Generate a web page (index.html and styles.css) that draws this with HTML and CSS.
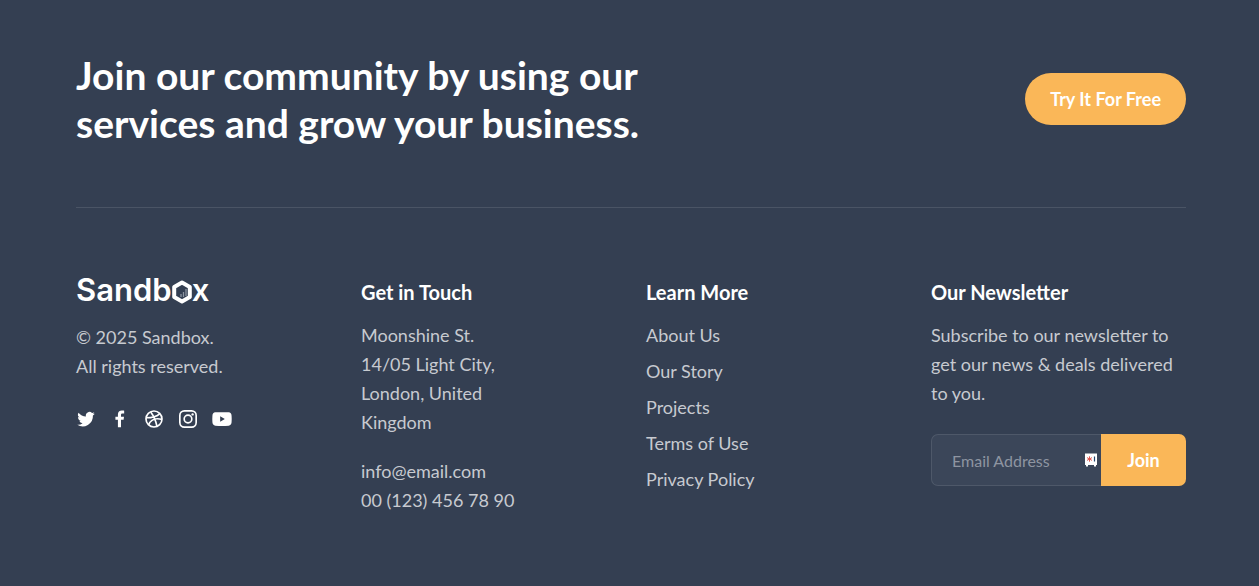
FILE: index.html
```
<!DOCTYPE html>
<html lang="en">
<head>
<meta charset="utf-8">
<meta name="viewport" content="width=device-width, initial-scale=1">
<title>Sandbox</title>
<link rel="stylesheet" href="styles.css">
</head>
<body>
<footer class="footer">
  <div class="cta">
    <h2 class="cta-title">Join our community by using our services and grow your business.</h2>
    <button class="cta-button" type="button">Try It For Free</button>
  </div>
  <div class="columns">
    <div class="column">
      <a class="logo" href="#" aria-label="Sandbox"><span>Sandb</span><svg class="logo-hex" viewBox="0 0 20 24" aria-hidden="true"><path d="M10 2.500 17.800 7v10L10 21.500 2.200 17V7z" fill="none" stroke="#fff" stroke-width="4" stroke-linejoin="round"/><path d="M9 17v-3M11.500 17v-5M14 16V9" stroke="#8d95a1" stroke-width="1.300"/></svg><span>x</span></a>
      <p class="copyright">© 2025 Sandbox.<br>All rights reserved.</p>
      <nav class="social" aria-label="Social">
        <a href="#" aria-label="Twitter"><svg viewBox="0 0 24 24"><path d="M22.500 5.600a8.700 8.700 0 0 1-2.500.7 4.300 4.300 0 0 0 1.900-2.400 8.700 8.700 0 0 1-2.700 1 4.300 4.300 0 0 0-7.300 4A12.200 12.200 0 0 1 3 4.400a4.300 4.300 0 0 0 1.300 5.700 4.300 4.300 0 0 1-1.900-.5 4.300 4.300 0 0 0 3.400 4.300 4.300 4.300 0 0 1-1.900.1 4.300 4.300 0 0 0 4 3A8.600 8.600 0 0 1 1.500 18.800a12.200 12.200 0 0 0 18.800-10.900 8.800 8.800 0 0 0 2.200-2.300z"/></svg></a>
        <a href="#" aria-label="Facebook"><svg viewBox="0 0 24 24"><path d="M9.500 22V13H6.500V9.300h3V6.500c0-3.200 1.900-4.700 4.700-4.700 1.300 0 2.400.1 2.800.2v3.300h-2c-1.500 0-1.800.8-1.800 1.800v2.200h3.600l-.5 3.700h-3.100v9z"/></svg></a>
        <a href="#" aria-label="Dribbble"><svg class="line" viewBox="0 0 24 24"><circle cx="12" cy="12" r="9.600"/><path d="M8 3.500c3.500 4.500 6 9.500 7.500 17M2.500 10.500C9 10.500 15 9.500 19 5.500M5.500 19C8 13 14 10.500 21.500 12.500"/></svg></a>
        <a href="#" aria-label="Instagram"><svg class="line" viewBox="0 0 24 24"><rect x="2.200" y="2.200" width="19.600" height="19.600" rx="5.500"/><circle cx="12" cy="12" r="4.600"/><circle class="dot" cx="17.500" cy="6.500" r="1.400"/></svg></a>
        <a href="#" aria-label="YouTube"><svg viewBox="0 0 24 24"><path fill-rule="evenodd" d="M4 4Q12 3.500 20 4q3.300.3 3.500 4 .3 4 0 8-.2 3.700-3.500 4-8 .5-16 0-3.300-.3-3.500-4-.3-4 0-8Q.7 4.300 4 4zM9.800 8.800v6.400L15.400 12z"/></svg></a>
      </nav>
    </div>
    <div class="column">
      <h3 class="column-title">Get in Touch</h3>
      <address class="address">Moonshine St. 14/05 Light City, London, United Kingdom</address>
      <a href="mailto:info@email.com">info@email.com</a><br>
      <span>00 (123) 456 78 90</span>
    </div>
    <div class="column">
      <h3 class="column-title">Learn More</h3>
      <ul class="links">
        <li><a href="#">About Us</a></li>
        <li><a href="#">Our Story</a></li>
        <li><a href="#">Projects</a></li>
        <li><a href="#">Terms of Use</a></li>
        <li><a href="#">Privacy Policy</a></li>
      </ul>
    </div>
    <div class="column">
      <h3 class="column-title">Our Newsletter</h3>
      <p class="newsletter-text">Subscribe to our newsletter to get our news &amp; deals delivered to you.</p>
      <form class="newsletter">
        <div class="field">
          <input id="email" type="email" placeholder="Email Address" aria-label="Email Address">
          <svg class="field-icon" viewBox="0 0 14 14" aria-hidden="true"><path d="M1 .5h12v11.500h-1v1.500h-2V12H4v1.500H2V12H1z" fill="#fff"/><path d="M5.500 3.300v5.400M3 4.600l5 2.800M8 4.600 3 7.400" stroke="#e0564f" stroke-width="1"/><path d="M10.500 3.500v5" stroke="#22476f" stroke-width="1.200"/></svg>
        </div>
        <button class="join" type="submit">Join</button>
      </form>
    </div>
  </div>
</footer>
</body>
</html>
```
FILE: styles.css
```
* { box-sizing: border-box; }
body {
  margin: 0;
  background: #343f52;
  color: #c7cad0;
  font: 400 18px/29px Lato, sans-serif;
}
a { color: inherit; text-decoration: none; }
h2, h3, p, ul { margin: 0; padding: 0; }
button { border: 0; font: inherit; color: #fff; background: #fab758; font-weight: 700; cursor: pointer; }
.footer { padding: 51px 73px 70px 76px; }
.cta {
  display: flex;
  align-items: center;
  justify-content: space-between;
  padding-bottom: 60px;
  border-bottom: 1px solid #4a5465;
}
.cta-title { max-width: 640px; color: #fff; font-size: 39px; line-height: 48px; font-weight: 700; }
.cta-button { height: 52px; padding: 0 25px; border-radius: 26px; }
.columns { display: grid; grid-template-columns: repeat(4, 1fr); gap: 30px; padding-top: 70px; }
.column-title { margin-bottom: 15px; color: #fff; font-size: 20px; line-height: 28px; font-weight: 700; }
.logo { display: flex; align-items: center; height: 24px; color: #fff; font: 600 31px/24px Inter, sans-serif; }
.logo-hex { width: 20px; height: 24px; margin-top: 4px; }
.copyright { margin-top: 21px; }
.social { display: flex; gap: 14px; margin-top: 28px; }
.social a { display: flex; }
.social svg { width: 20px; height: 20px; fill: #fff; }
.social .line { fill: none; stroke: #fff; stroke-width: 2; }
.social .dot { fill: #fff; stroke: none; }
.address { max-width: 150px; margin-bottom: 20px; font-style: normal; }
.links { display: grid; gap: 7px; list-style: none; }
.newsletter { display: flex; margin-top: 26px; }
.field { position: relative; flex: 1; min-width: 0; }
.field input {
  width: 100%;
  height: 52px;
  padding: 0 28px 0 20px;
  border: 1px solid #4e5869;
  border-right: 0;
  border-radius: 7px 0 0 7px;
  background: #3b4659;
  color: #fff;
  font: inherit;
  font-size: 16px;
}
.field input::placeholder { color: #8e95a1; opacity: 1; }
.field-icon { position: absolute; right: 3px; top: 19px; width: 14px; height: 14px; }
.join { width: 85px; height: 52px; border-radius: 0 7px 7px 0; }
```
